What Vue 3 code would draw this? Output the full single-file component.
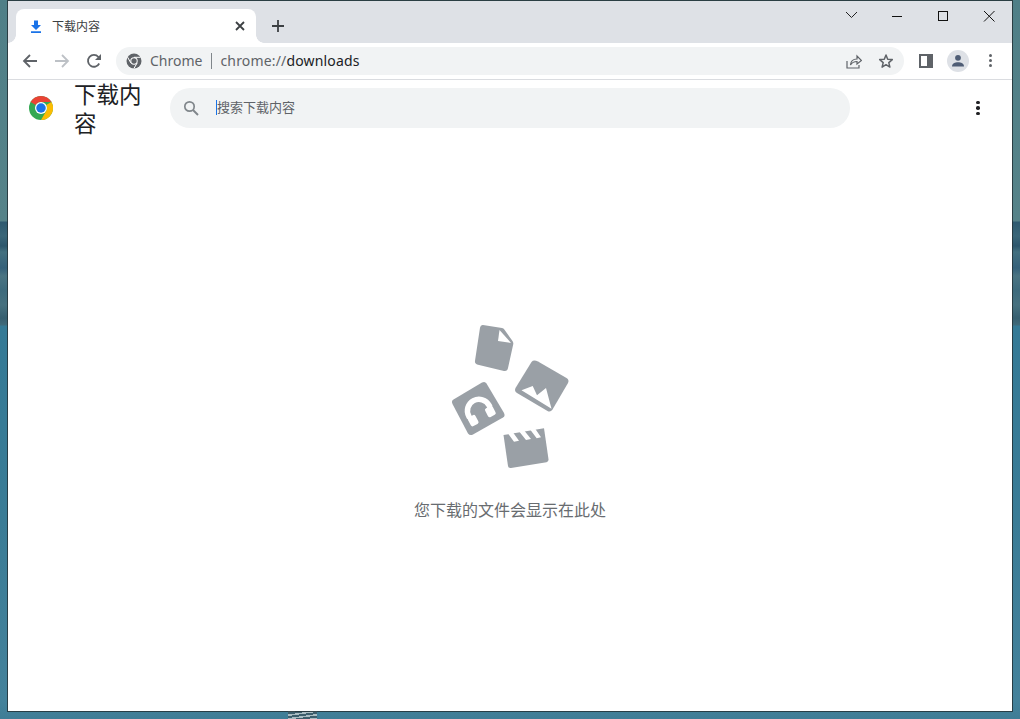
<template>
  <div class="desktop">
    <div class="streak"></div>
    <div class="window">
      <header class="tabstrip">
        <div class="tab">
          <svg class="tab-icon" viewBox="0 0 16 16" width="16" height="16">
            <path d="M6 2.500h4v4.500h3l-5 5-5-5h3zM3 13.200h10V15H3z" fill="#1a73e8" />
          </svg>
          <span class="tab-title">下载内容</span>
          <svg class="tab-close" viewBox="0 0 12 12" width="12" height="12">
            <path d="M2 2l8 8M10 2l-8 8" stroke="#3c4043" stroke-width="1.8" fill="none" />
          </svg>
        </div>
        <svg class="new-tab" viewBox="0 0 14 14" width="14" height="14">
          <path d="M7 1v12M1 7h12" stroke="#3c4043" stroke-width="1.8" fill="none" />
        </svg>
        <div class="win-controls">
          <svg viewBox="0 0 46 30" width="46" height="30">
            <path d="M18 11l5.500 5.500L29 11" stroke="#222" fill="none" />
          </svg>
          <svg viewBox="0 0 46 30" width="46" height="30">
            <path d="M18 15.500h10" stroke="#111" fill="none" />
          </svg>
          <svg viewBox="0 0 46 30" width="46" height="30">
            <rect x="18.500" y="10.500" width="9" height="9" stroke="#111" fill="none" />
          </svg>
          <svg viewBox="0 0 46 30" width="46" height="30">
            <path d="M18 10l10.500 10.500M28.500 10L18 20.500" stroke="#111" fill="none" />
          </svg>
        </div>
      </header>

      <nav class="toolbar">
        <div class="nav-group">
          <svg viewBox="0 0 16 16" width="16" height="16">
            <path d="M15 8H2.500M8 2L2 8l6 6" stroke="#5f6368" stroke-width="1.8" fill="none" />
          </svg>
          <svg viewBox="0 0 16 16" width="16" height="16">
            <path d="M1 8h12.500M8 2l6 6-6 6" stroke="#bdc1c6" stroke-width="1.8" fill="none" />
          </svg>
          <svg viewBox="0 0 16 16" width="16" height="16">
            <path d="M13.200 10.500A5.900 5.900 0 1 1 12.400 4L14 5.700" stroke="#5f6368" stroke-width="1.800" fill="none" />
            <path d="M15 1v6H9z" fill="#5f6368" />
          </svg>
        </div>
        <div class="omnibox">
          <svg class="site-icon" viewBox="0 0 16 16" width="16" height="16">
            <circle cx="8" cy="8" r="7.500" fill="#5f6368" />
            <circle cx="8" cy="8" r="3.700" fill="#fff" />
            <circle cx="8" cy="8" r="2.700" fill="#5f6368" />
            <path d="M8 4.300h6.500M4.800 9.900L1.600 4.200M11.200 9.900l-3.300 5.600" stroke="#fff" stroke-width="1" />
          </svg>
          <span class="site-name">Chrome</span>
          <span class="divider"></span>
          <span class="url"><span class="url-dim">chrome://</span>downloads</span>
          <svg class="omni-icon" viewBox="0 0 16 16" width="16" height="16">
            <path d="M1 8v7h12v-3M4.500 12c.3-4 3-6 6.500-6V3l4.500 4.500L11 11V8.500c-2.500 0-5 1-6.500 3.500z" stroke="#5f6368" stroke-width="1.200" fill="none" />
          </svg>
          <svg class="omni-icon" viewBox="0 0 16 16" width="16" height="16">
            <path d="M8 2l1.700 4.300 4.600.3-3.500 3 1.100 4.500L8 11.700l-3.900 2.400 1.100-4.500-3.500-3 4.600-.3z" stroke="#5f6368" stroke-width="1.500" stroke-linejoin="round" fill="none" />
          </svg>
        </div>
        <div class="toolbar-right">
          <svg viewBox="0 0 14 14" width="14" height="14">
            <path fill-rule="evenodd" d="M0 0h14v14H0zM2 2v10h6V2z" fill="#5f6368" />
          </svg>
          <div class="avatar">
            <svg viewBox="0 0 14 14" width="14" height="14">
              <circle cx="7" cy="3.800" r="2.900" fill="#4f5d75" />
              <path d="M1 12.500c0-3 3-4.300 6-4.300s6 1.300 6 4.300z" fill="#4f5d75" />
            </svg>
          </div>
          <div class="dots dots-toolbar"><i></i><i></i><i></i></div>
        </div>
      </nav>

      <main class="page">
        <div class="page-head">
          <svg class="logo" viewBox="0 0 48 48" width="24" height="24">
            <circle cx="24" cy="24" r="24" fill="#34a853" />
            <path d="M24 0a24 24 0 0 1 20.800 12H24a12 12 0 0 0-10.400 6L3.200 12A24 24 0 0 1 24 0z" fill="#ea4335" />
            <path d="M44.800 12A24 24 0 0 1 24 48l10.400-18a12 12 0 0 0 0-12z" fill="#fbbc04" />
            <circle cx="24" cy="24" r="12" fill="#fff" />
            <circle cx="24" cy="24" r="9.500" fill="#1a73e8" />
          </svg>
          <h1 class="title">下载内容</h1>
          <div class="search">
            <svg viewBox="0 0 16 16" width="16" height="16">
              <circle cx="6.500" cy="6.500" r="4.700" stroke="#80868b" stroke-width="1.700" fill="none" />
              <path d="M10 10l5 5" stroke="#80868b" stroke-width="1.900" />
            </svg>
            <span class="caret"></span>
            <span class="placeholder">搜索下载内容</span>
          </div>
          <div class="dots dots-page"><i></i><i></i><i></i></div>
        </div>

        <div class="empty">
          <svg class="empty-art" viewBox="0 0 160 170" width="160" height="170">
            <!-- document -->
            <path d="M53 15l19 3q1.500.3 2.500 1.700l8 11.300q1 1.500.8 3L78 58q-.5 3.500-4 3l-26-6.300q-3.500-.8-3-4l5-33q.5-3 3-2.700z" fill="#9aa0a6" />
            <path d="M69.500 20L81 33l-13-2z" fill="#fff" />
            <!-- picture -->
            <path d="M108 51.500l28.500 16.500q3 2 1.500 5l-15.500 26.500q-2 3-5 1.500L87 83q-3-2-1.500-5l16-26q2-2.500 6.500-.5z" fill="#9aa0a6" />
            <path d="M91.500 80.300L102.700 76l4.300 9.300L116 78l5.500 20.700z" fill="#fff" />
            <!-- music -->
            <path d="M52 72.500q3-1.500 4.500 1L74 103q1.500 3-1 4.500l-30 17q-3 1.500-5-1L22.500 94q-1.500-3 1-4.500z" fill="#9aa0a6" />
            <g transform="rotate(-28 48 99)">
              <path d="M36.500 103v-2a11.500 11.500 0 0 1 23 0v2" stroke="#fff" stroke-width="5.500" fill="none" />
              <rect x="34" y="102" width="8.500" height="10" rx="2" fill="#fff" />
              <rect x="53.500" y="102" width="8.500" height="10" rx="2" fill="#fff" />
            </g>
            <!-- clapperboard -->
            <path d="M73.500 125L114 118.300l4.500 31q.3 2.500-2 3L81 158q-2.500.4-3-2z" fill="#9aa0a6" />
            <path d="M77 122l5-1 7 9.700-5 1zM88 120l5-1 8 10-5 1zM99 118l5-1 7 10.300-4.300 1z" fill="#fff" />
          </svg>
          <p class="empty-text">您下载的文件会显示在此处</p>
        </div>
      </main>
    </div>
  </div>
</template>

<script setup>
</script>

<style>
html, body {
  margin: 0;
  height: 100%;
  overflow: hidden;
}
</style>

<style scoped>
.desktop {
  position: relative;
  width: 1020px;
  height: 719px;
  padding: 1px 8px 8px;
  box-sizing: border-box;
  overflow: hidden;
  font-family: "Noto Sans", "Noto Sans CJK SC", sans-serif;
  background: linear-gradient(180deg,
    #4f7f87 0, #568389 221px,
    #2f5a70 222px, #3a6678 236px, #2c566c 246px, #43707f 252px, #35617a 268px,
    #4a7482 276px, #3d6a7c 290px, #46717f 305px, #365f70 318px, #3f6a7a 325px,
    #347a96 326px, #3a7c96 520px, #44829b 700px, #3f7d96 100%);
}
.streak {
  position: absolute;
  left: 288px;
  bottom: 0;
  width: 29px;
  height: 8px;
  background: repeating-linear-gradient(172deg, #a9bcc2 0 1.500px, #3d5e6c 1.500px 3.500px);
}
.window {
  position: relative;
  display: flex;
  flex-direction: column;
  height: 710px;
  background: #fff;
  box-shadow: 0 0 0 1px rgba(35, 50, 55, 0.85);
}

/* tab strip */
.tabstrip {
  display: flex;
  align-items: flex-end;
  height: 42px;
  padding-left: 8px;
  background: #dee1e6;
}
.tab {
  position: relative;
  display: flex;
  align-items: center;
  width: 240px;
  height: 34px;
  padding: 0 8px 0 12px;
  box-sizing: border-box;
  background: #fff;
  border-radius: 8px 8px 0 0;
}
.tab::before,
.tab::after {
  content: "";
  position: absolute;
  bottom: 0;
  width: 8px;
  height: 8px;
}
.tab::before {
  left: -8px;
  background: radial-gradient(circle at 0 0, transparent 7.500px, #fff 8px);
}
.tab::after {
  right: -8px;
  background: radial-gradient(circle at 100% 0, transparent 7.500px, #fff 8px);
}
.tab-title {
  margin-left: 8px;
  font-size: 12px;
  color: #3c4043;
  flex: 1;
}
.tab-close {
  margin-right: 2px;
}
.new-tab {
  align-self: center;
  margin: 8px 0 0 15px;
}
.win-controls {
  display: flex;
  align-items: flex-start;
  align-self: flex-start;
  margin-left: auto;
}

/* toolbar */
.toolbar {
  display: flex;
  align-items: center;
  height: 37px;
  padding: 0 14px 1px;
  box-sizing: border-box;
  background: #fff;
  border-bottom: 1px solid #dadce0;
}
.nav-group {
  display: flex;
  gap: 16px;
}
.omnibox {
  display: flex;
  align-items: center;
  width: 788px;
  height: 28px;
  margin-left: 14px;
  padding: 0 10px;
  box-sizing: border-box;
  background: #f1f3f4;
  border-radius: 14px;
  font-size: 14px;
}
.site-name {
  margin-left: 8px;
  color: #5f6368;
}
.divider {
  width: 1px;
  height: 16px;
  margin: 0 8px 0 9px;
  background: #80868b;
}
.url {
  flex: 1;
  color: #202124;
  letter-spacing: 0.16px;
}
.url-dim {
  color: #5f6368;
}
.omni-icon {
  margin-left: 16px;
}
.toolbar-right {
  display: flex;
  align-items: center;
  margin-left: 15px;
}
.avatar {
  display: flex;
  align-items: center;
  justify-content: center;
  width: 22px;
  height: 22px;
  margin-left: 14px;
  border-radius: 50%;
  background: #dee1e6;
}
.dots {
  display: flex;
  flex-direction: column;
  gap: 2px;
}
.dots i {
  display: block;
  width: 3px;
  height: 3px;
  border-radius: 50%;
  background: #5f6368;
}
.dots-toolbar {
  margin-left: 20px;
}

/* page */
.page {
  flex: 1;
  display: flex;
  flex-direction: column;
}
.page-head {
  display: flex;
  align-items: center;
  height: 56px;
}
.logo {
  margin-left: 21px;
  flex: none;
}
.title {
  width: 72px;
  margin: 1px 0 0 21px;
  font-size: 22.500px;
  line-height: 29px;
  font-weight: 400;
  color: #202124;
  flex: none;
}
.search {
  display: flex;
  align-items: center;
  width: 680px;
  height: 40px;
  margin-left: 24px;
  padding-left: 13px;
  box-sizing: border-box;
  background: #f1f3f4;
  border-radius: 20px;
}
.caret {
  width: 1px;
  height: 15px;
  margin: -1px 0 0 17px;
  background: #1a73e8;
}
.placeholder {
  margin-top: -3px;
  font-size: 13px;
  color: #5f6368;
}
.dots-page {
  margin-left: 126px;
}
.dots-page i {
  width: 3.500px;
  height: 3.500px;
  background: #202124;
}
.empty {
  display: flex;
  flex-direction: column;
  align-items: center;
  margin-top: 174px;
}
.empty-art {
  display: block;
}
.empty-text {
  margin: 18px 0 0;
  font-size: 16px;
  line-height: 24px;
  color: #686c70;
}
</style>
